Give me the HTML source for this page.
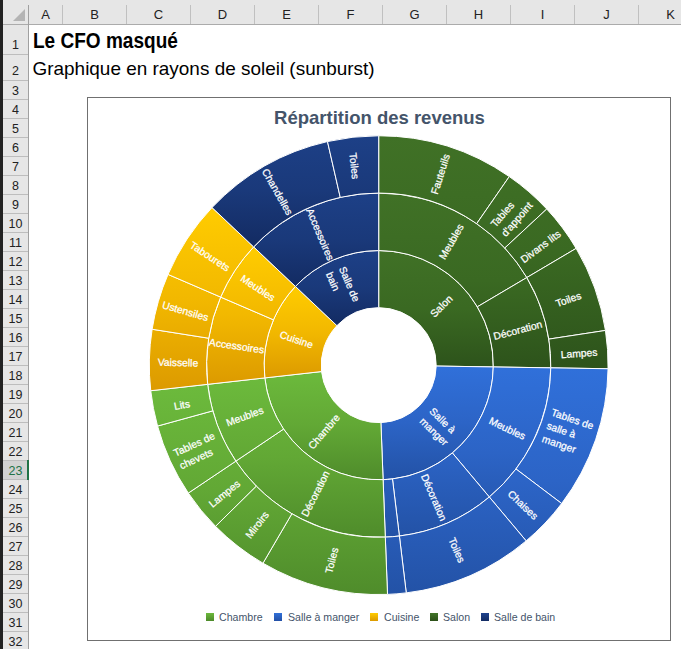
<!DOCTYPE html>
<html><head><meta charset="utf-8"><style>
html,body{margin:0;padding:0;}
body{width:681px;height:649px;overflow:hidden;position:relative;background:#fff;font-family:"Liberation Sans",sans-serif;}
.strip{position:absolute;left:0;top:0;width:3px;height:649px;background:#222;}
.hdr{position:absolute;left:3px;top:0;width:678px;height:24px;background:#e6e6e6;border-bottom:1px solid #ababab;}
.corner{position:absolute;left:3px;top:0;width:25px;height:24px;}
.tri{position:absolute;left:10px;top:9px;width:0;height:0;border-left:12px solid transparent;border-bottom:12px solid #b4b4b4;}
.ch{position:absolute;top:0;height:24px;line-height:30px;text-align:center;font-size:13px;color:#222;}
.cl{position:absolute;top:5px;width:1px;height:19px;background:#c0c0c0;}
.rh{position:absolute;left:3px;width:25px;text-align:center;font-size:12.5px;color:#222;background:#e6e6e6;}
.rh.sel{background:#d2d2d2;color:#217346;}
.rl{position:absolute;left:3px;width:25px;height:1px;background:#bdbdbd;}
.vl{position:absolute;left:28px;top:5px;width:1px;height:644px;background:#a0a0a0;}
.selbar{position:absolute;left:27px;width:2px;background:#217346;}
.t1{position:absolute;left:33px;top:28.5px;font-size:21.5px;font-weight:bold;color:#000;line-height:24px;transform:scaleX(0.885);transform-origin:0 0;}
.t2{position:absolute;left:32.5px;top:58.5px;font-size:18.95px;color:#000;line-height:20px;}
.box{position:absolute;left:87px;top:97px;width:582px;height:542px;border:1px solid #707070;background:#fff;}
.ctitle{position:absolute;left:87.5px;top:107px;width:584px;text-align:center;font-size:18.5px;font-weight:bold;color:#44546a;line-height:22px;}
.chart{position:absolute;left:0;top:0;}
.leg{position:absolute;top:610px;font-size:10.6px;color:#44546a;line-height:14px;white-space:nowrap;}
.sq{position:absolute;top:613px;width:8px;height:8px;}
</style></head><body>
<div class="hdr"></div>
<div class="corner"><div class="tri"></div></div>
<div class="ch" style="left:29px;width:33px">A</div><div class="ch" style="left:63px;width:63px">B</div><div class="cl" style="left:62px"></div><div class="ch" style="left:127px;width:63px">C</div><div class="cl" style="left:126px"></div><div class="ch" style="left:191px;width:63px">D</div><div class="cl" style="left:190px"></div><div class="ch" style="left:255px;width:63px">E</div><div class="cl" style="left:254px"></div><div class="ch" style="left:319px;width:63px">F</div><div class="cl" style="left:318px"></div><div class="ch" style="left:383px;width:63px">G</div><div class="cl" style="left:382px"></div><div class="ch" style="left:447px;width:63px">H</div><div class="cl" style="left:446px"></div><div class="ch" style="left:511px;width:63px">I</div><div class="cl" style="left:510px"></div><div class="ch" style="left:575px;width:63px">J</div><div class="cl" style="left:574px"></div><div class="ch" style="left:639px;width:63px">K</div><div class="cl" style="left:638px"></div>
<div class="rh" style="top:25px;height:29px"><span style="position:absolute;left:0;width:25px;top:11px;line-height:19px">1</span></div><div class="rl" style="top:54px"></div><div class="rh" style="top:55px;height:25px"><span style="position:absolute;left:0;width:25px;top:7px;line-height:19px">2</span></div><div class="rl" style="top:80px"></div><div class="rh" style="top:81px;height:18px"><span style="position:absolute;left:0;width:25px;top:1px;line-height:19px">3</span></div><div class="rl" style="top:99px"></div><div class="rh" style="top:100px;height:18px"><span style="position:absolute;left:0;width:25px;top:1px;line-height:19px">4</span></div><div class="rl" style="top:118px"></div><div class="rh" style="top:119px;height:18px"><span style="position:absolute;left:0;width:25px;top:1px;line-height:19px">5</span></div><div class="rl" style="top:137px"></div><div class="rh" style="top:138px;height:18px"><span style="position:absolute;left:0;width:25px;top:1px;line-height:19px">6</span></div><div class="rl" style="top:156px"></div><div class="rh" style="top:157px;height:18px"><span style="position:absolute;left:0;width:25px;top:1px;line-height:19px">7</span></div><div class="rl" style="top:175px"></div><div class="rh" style="top:176px;height:18px"><span style="position:absolute;left:0;width:25px;top:1px;line-height:19px">8</span></div><div class="rl" style="top:194px"></div><div class="rh" style="top:195px;height:18px"><span style="position:absolute;left:0;width:25px;top:1px;line-height:19px">9</span></div><div class="rl" style="top:213px"></div><div class="rh" style="top:214px;height:18px"><span style="position:absolute;left:0;width:25px;top:1px;line-height:19px">10</span></div><div class="rl" style="top:232px"></div><div class="rh" style="top:233px;height:18px"><span style="position:absolute;left:0;width:25px;top:1px;line-height:19px">11</span></div><div class="rl" style="top:251px"></div><div class="rh" style="top:252px;height:18px"><span style="position:absolute;left:0;width:25px;top:1px;line-height:19px">12</span></div><div class="rl" style="top:270px"></div><div class="rh" style="top:271px;height:18px"><span style="position:absolute;left:0;width:25px;top:1px;line-height:19px">13</span></div><div class="rl" style="top:289px"></div><div class="rh" style="top:290px;height:18px"><span style="position:absolute;left:0;width:25px;top:1px;line-height:19px">14</span></div><div class="rl" style="top:308px"></div><div class="rh" style="top:309px;height:18px"><span style="position:absolute;left:0;width:25px;top:1px;line-height:19px">15</span></div><div class="rl" style="top:327px"></div><div class="rh" style="top:328px;height:18px"><span style="position:absolute;left:0;width:25px;top:1px;line-height:19px">16</span></div><div class="rl" style="top:346px"></div><div class="rh" style="top:347px;height:18px"><span style="position:absolute;left:0;width:25px;top:1px;line-height:19px">17</span></div><div class="rl" style="top:365px"></div><div class="rh" style="top:366px;height:18px"><span style="position:absolute;left:0;width:25px;top:1px;line-height:19px">18</span></div><div class="rl" style="top:384px"></div><div class="rh" style="top:385px;height:18px"><span style="position:absolute;left:0;width:25px;top:1px;line-height:19px">19</span></div><div class="rl" style="top:403px"></div><div class="rh" style="top:404px;height:18px"><span style="position:absolute;left:0;width:25px;top:1px;line-height:19px">20</span></div><div class="rl" style="top:422px"></div><div class="rh" style="top:423px;height:18px"><span style="position:absolute;left:0;width:25px;top:1px;line-height:19px">21</span></div><div class="rl" style="top:441px"></div><div class="rh" style="top:442px;height:18px"><span style="position:absolute;left:0;width:25px;top:1px;line-height:19px">22</span></div><div class="rl" style="top:460px"></div><div class="rh sel" style="top:461px;height:18px"><span style="position:absolute;left:0;width:25px;top:1px;line-height:19px">23</span></div><div class="rl" style="top:479px"></div><div class="rh" style="top:480px;height:18px"><span style="position:absolute;left:0;width:25px;top:1px;line-height:19px">24</span></div><div class="rl" style="top:498px"></div><div class="rh" style="top:499px;height:18px"><span style="position:absolute;left:0;width:25px;top:1px;line-height:19px">25</span></div><div class="rl" style="top:517px"></div><div class="rh" style="top:518px;height:18px"><span style="position:absolute;left:0;width:25px;top:1px;line-height:19px">26</span></div><div class="rl" style="top:536px"></div><div class="rh" style="top:537px;height:18px"><span style="position:absolute;left:0;width:25px;top:1px;line-height:19px">27</span></div><div class="rl" style="top:555px"></div><div class="rh" style="top:556px;height:18px"><span style="position:absolute;left:0;width:25px;top:1px;line-height:19px">28</span></div><div class="rl" style="top:574px"></div><div class="rh" style="top:575px;height:18px"><span style="position:absolute;left:0;width:25px;top:1px;line-height:19px">29</span></div><div class="rl" style="top:593px"></div><div class="rh" style="top:594px;height:18px"><span style="position:absolute;left:0;width:25px;top:1px;line-height:19px">30</span></div><div class="rl" style="top:612px"></div><div class="rh" style="top:613px;height:18px"><span style="position:absolute;left:0;width:25px;top:1px;line-height:19px">31</span></div><div class="rl" style="top:631px"></div><div class="rh" style="top:632px;height:18px"><span style="position:absolute;left:0;width:25px;top:1px;line-height:19px">32</span></div><div class="rl" style="top:650px"></div>
<div class="vl"></div>
<div class="selbar" style="top:460px;height:20px"></div>
<div class="strip"></div>
<div class="t1">Le CFO masqué</div>
<div class="t2">Graphique en rayons de soleil (sunburst)</div>
<div class="box"></div>
<div class="ctitle">Répartition des revenus</div>
<svg class="chart" width="681" height="649" viewBox="0 0 681 649">
<defs><linearGradient id="gSalon0" gradientUnits="userSpaceOnUse" x1="0" y1="250.5" x2="0" y2="367.0"><stop offset="0" stop-color="#407126"/><stop offset="0.5" stop-color="#3a6922"/><stop offset="1" stop-color="#2d531b"/></linearGradient><linearGradient id="gSalon1" gradientUnits="userSpaceOnUse" x1="0" y1="193.0" x2="0" y2="367.9"><stop offset="0" stop-color="#407126"/><stop offset="0.5" stop-color="#3a6922"/><stop offset="1" stop-color="#2d531b"/></linearGradient><linearGradient id="gSalon2" gradientUnits="userSpaceOnUse" x1="0" y1="135.7" x2="0" y2="368.8"><stop offset="0" stop-color="#407126"/><stop offset="0.5" stop-color="#3a6922"/><stop offset="1" stop-color="#2d531b"/></linearGradient><linearGradient id="gSaM0" gradientUnits="userSpaceOnUse" x1="0" y1="366.1" x2="0" y2="479.7"><stop offset="0" stop-color="#3070da"/><stop offset="0.5" stop-color="#2c64c6"/><stop offset="1" stop-color="#2352a6"/></linearGradient><linearGradient id="gSaM1" gradientUnits="userSpaceOnUse" x1="0" y1="367.0" x2="0" y2="537.1"><stop offset="0" stop-color="#3070da"/><stop offset="0.5" stop-color="#2c64c6"/><stop offset="1" stop-color="#2352a6"/></linearGradient><linearGradient id="gSaM2" gradientUnits="userSpaceOnUse" x1="0" y1="367.9" x2="0" y2="594.4"><stop offset="0" stop-color="#3070da"/><stop offset="0.5" stop-color="#2c64c6"/><stop offset="1" stop-color="#2352a6"/></linearGradient><linearGradient id="gChambre0" gradientUnits="userSpaceOnUse" x1="0" y1="371.6" x2="0" y2="479.7"><stop offset="0" stop-color="#6cba3c"/><stop offset="0.5" stop-color="#62a835"/><stop offset="1" stop-color="#4f8c2b"/></linearGradient><linearGradient id="gChambre1" gradientUnits="userSpaceOnUse" x1="0" y1="377.9" x2="0" y2="537.2"><stop offset="0" stop-color="#6cba3c"/><stop offset="0.5" stop-color="#62a835"/><stop offset="1" stop-color="#4f8c2b"/></linearGradient><linearGradient id="gChambre2" gradientUnits="userSpaceOnUse" x1="0" y1="384.3" x2="0" y2="594.5"><stop offset="0" stop-color="#6cba3c"/><stop offset="0.5" stop-color="#62a835"/><stop offset="1" stop-color="#4f8c2b"/></linearGradient><linearGradient id="gCuisine0" gradientUnits="userSpaceOnUse" x1="0" y1="286.4" x2="0" y2="377.9"><stop offset="0" stop-color="#ffcc00"/><stop offset="0.5" stop-color="#f2b800"/><stop offset="1" stop-color="#dc9a00"/></linearGradient><linearGradient id="gCuisine1" gradientUnits="userSpaceOnUse" x1="0" y1="246.9" x2="0" y2="384.3"><stop offset="0" stop-color="#ffcc00"/><stop offset="0.5" stop-color="#f2b800"/><stop offset="1" stop-color="#dc9a00"/></linearGradient><linearGradient id="gCuisine2" gradientUnits="userSpaceOnUse" x1="0" y1="207.5" x2="0" y2="390.7"><stop offset="0" stop-color="#ffcc00"/><stop offset="0.5" stop-color="#f2b800"/><stop offset="1" stop-color="#dc9a00"/></linearGradient><linearGradient id="gSdB0" gradientUnits="userSpaceOnUse" x1="0" y1="250.5" x2="0" y2="325.6"><stop offset="0" stop-color="#1d4087"/><stop offset="0.5" stop-color="#1a397a"/><stop offset="1" stop-color="#132b62"/></linearGradient><linearGradient id="gSdB1" gradientUnits="userSpaceOnUse" x1="0" y1="193.0" x2="0" y2="286.4"><stop offset="0" stop-color="#1d4087"/><stop offset="0.5" stop-color="#1a397a"/><stop offset="1" stop-color="#132b62"/></linearGradient><linearGradient id="gSdB2" gradientUnits="userSpaceOnUse" x1="0" y1="135.7" x2="0" y2="246.9"><stop offset="0" stop-color="#1d4087"/><stop offset="0.5" stop-color="#1a397a"/><stop offset="1" stop-color="#132b62"/></linearGradient></defs>
<g stroke="#fff" stroke-width="1"><path d="M378.70,250.55 A114.6,114.6 0 0 1 493.29,366.95 L436.19,366.05 A57.5,57.5 0 0 0 378.70,307.65 Z" fill="url(#gSalon0)"/><path d="M378.70,193.05 A172.1,172.1 0 0 1 526.83,277.54 L477.34,306.81 A114.6,114.6 0 0 0 378.70,250.55 Z" fill="url(#gSalon1)"/><path d="M378.70,135.75 A229.4,229.4 0 0 1 509.29,176.55 L476.67,223.66 A172.1,172.1 0 0 0 378.70,193.05 Z" fill="url(#gSalon2)"/><path d="M509.29,176.55 A229.4,229.4 0 0 1 546.75,208.99 L504.77,248.00 A172.1,172.1 0 0 0 476.67,223.66 Z" fill="url(#gSalon2)"/><path d="M546.75,208.99 A229.4,229.4 0 0 1 576.15,248.38 L526.83,277.54 A172.1,172.1 0 0 0 504.77,248.00 Z" fill="url(#gSalon2)"/><path d="M526.83,277.54 A172.1,172.1 0 0 1 550.78,367.85 L493.29,366.95 A114.6,114.6 0 0 0 477.34,306.81 Z" fill="url(#gSalon1)"/><path d="M576.15,248.38 A229.4,229.4 0 0 1 605.46,330.45 L548.82,339.12 A172.1,172.1 0 0 0 526.83,277.54 Z" fill="url(#gSalon2)"/><path d="M605.46,330.45 A229.4,229.4 0 0 1 608.07,368.75 L550.78,367.85 A172.1,172.1 0 0 0 548.82,339.12 Z" fill="url(#gSalon2)"/><path d="M493.29,366.95 A114.6,114.6 0 0 1 383.10,479.67 L380.91,422.61 A57.5,57.5 0 0 0 436.19,366.05 Z" fill="url(#gSaM0)"/><path d="M550.78,367.85 A172.1,172.1 0 0 1 489.32,496.99 L452.36,452.94 A114.6,114.6 0 0 0 493.29,366.95 Z" fill="url(#gSaM1)"/><path d="M608.07,368.75 A229.4,229.4 0 0 1 561.67,503.53 L515.96,468.96 A172.1,172.1 0 0 0 550.78,367.85 Z" fill="url(#gSaM2)"/><path d="M561.67,503.53 A229.4,229.4 0 0 1 526.16,540.88 L489.32,496.99 A172.1,172.1 0 0 0 515.96,468.96 Z" fill="url(#gSaM2)"/><path d="M489.32,496.99 A172.1,172.1 0 0 1 399.38,536.00 L392.47,478.92 A114.6,114.6 0 0 0 452.36,452.94 Z" fill="url(#gSaM1)"/><path d="M526.16,540.88 A229.4,229.4 0 0 1 406.26,592.89 L399.38,536.00 A172.1,172.1 0 0 0 489.32,496.99 Z" fill="url(#gSaM2)"/><path d="M399.38,536.00 A172.1,172.1 0 0 1 385.31,537.12 L383.10,479.67 A114.6,114.6 0 0 0 392.47,478.92 Z" fill="url(#gSaM1)"/><path d="M406.26,592.89 A229.4,229.4 0 0 1 387.51,594.38 L385.31,537.12 A172.1,172.1 0 0 0 399.38,536.00 Z" fill="url(#gSaM2)"/><path d="M383.10,479.67 A114.6,114.6 0 0 1 264.81,377.92 L321.56,371.56 A57.5,57.5 0 0 0 380.91,422.61 Z" fill="url(#gChambre0)"/><path d="M385.31,537.12 A172.1,172.1 0 0 1 235.85,461.14 L283.58,429.07 A114.6,114.6 0 0 0 383.10,479.67 Z" fill="url(#gChambre1)"/><path d="M387.51,594.38 A229.4,229.4 0 0 1 262.96,563.21 L291.87,513.74 A172.1,172.1 0 0 0 385.31,537.12 Z" fill="url(#gChambre2)"/><path d="M262.96,563.21 A229.4,229.4 0 0 1 215.50,526.37 L256.27,486.10 A172.1,172.1 0 0 0 291.87,513.74 Z" fill="url(#gChambre2)"/><path d="M215.50,526.37 A229.4,229.4 0 0 1 188.30,493.10 L235.85,461.14 A172.1,172.1 0 0 0 256.27,486.10 Z" fill="url(#gChambre2)"/><path d="M235.85,461.14 A172.1,172.1 0 0 1 207.67,384.33 L264.81,377.92 A114.6,114.6 0 0 0 283.58,429.07 Z" fill="url(#gChambre1)"/><path d="M188.30,493.10 A229.4,229.4 0 0 1 157.54,426.07 L212.78,410.85 A172.1,172.1 0 0 0 235.85,461.14 Z" fill="url(#gChambre2)"/><path d="M157.54,426.07 A229.4,229.4 0 0 1 150.73,390.72 L207.67,384.33 A172.1,172.1 0 0 0 212.78,410.85 Z" fill="url(#gChambre2)"/><path d="M264.81,377.92 A114.6,114.6 0 0 1 295.43,286.41 L336.92,325.64 A57.5,57.5 0 0 0 321.56,371.56 Z" fill="url(#gCuisine0)"/><path d="M207.67,384.33 A172.1,172.1 0 0 1 220.64,297.08 L273.45,319.82 A114.6,114.6 0 0 0 264.81,377.92 Z" fill="url(#gCuisine1)"/><path d="M150.73,390.72 A229.4,229.4 0 0 1 152.12,329.26 L208.72,338.23 A172.1,172.1 0 0 0 207.67,384.33 Z" fill="url(#gCuisine2)"/><path d="M152.12,329.26 A229.4,229.4 0 0 1 168.01,274.41 L220.64,297.08 A172.1,172.1 0 0 0 208.72,338.23 Z" fill="url(#gCuisine2)"/><path d="M220.64,297.08 A172.1,172.1 0 0 1 253.66,246.90 L295.43,286.41 A114.6,114.6 0 0 0 273.45,319.82 Z" fill="url(#gCuisine1)"/><path d="M168.01,274.41 A229.4,229.4 0 0 1 212.02,207.53 L253.66,246.90 A172.1,172.1 0 0 0 220.64,297.08 Z" fill="url(#gCuisine2)"/><path d="M295.43,286.41 A114.6,114.6 0 0 1 378.70,250.55 L378.70,307.65 A57.5,57.5 0 0 0 336.92,325.64 Z" fill="url(#gSdB0)"/><path d="M253.66,246.90 A172.1,172.1 0 0 1 378.70,193.05 L378.70,250.55 A114.6,114.6 0 0 0 295.43,286.41 Z" fill="url(#gSdB1)"/><path d="M212.02,207.53 A229.4,229.4 0 0 1 327.49,141.54 L340.28,197.39 A172.1,172.1 0 0 0 253.66,246.90 Z" fill="url(#gSdB2)"/><path d="M327.49,141.54 A229.4,229.4 0 0 1 378.70,135.75 L378.70,193.05 A172.1,172.1 0 0 0 340.28,197.39 Z" fill="url(#gSdB2)"/></g>
<g fill="#fff" font-family="Liberation Sans, sans-serif" font-size="10.3" text-anchor="start" dominant-baseline="central" stroke="#fff" stroke-width="0.25"><text transform="translate(440.02,304.78) rotate(-44.55)"><tspan x="-13.2" y="1.5">Salon</tspan></text><text transform="translate(449.72,240.63) rotate(-60.30)"><tspan x="-19.5" y="1.5">Meubles</tspan></text><text transform="translate(438.57,173.53) rotate(-72.65)"><tspan x="-20.9" y="1.5">Fauteuils</tspan></text><text transform="translate(510.14,213.41) rotate(-49.10)"><tspan x="-20.7" y="-5.5">Tables</tspan><tspan x="-20.7" y="8.5">d'appoint</tspan></text><text transform="translate(539.55,245.04) rotate(-36.75)"><tspan x="-23.5" y="1.5">Divans lits</tspan></text><text transform="translate(517.26,328.41) rotate(-14.85)"><tspan x="-24.9" y="1.5">Décoration</tspan></text><text transform="translate(567.76,297.64) rotate(-19.65)"><tspan x="-13.2" y="1.5">Toiles</tspan></text><text transform="translate(578.99,351.50) rotate(-3.90)"><tspan x="-18.3" y="1.5">Lampes</tspan></text><text transform="translate(440.23,425.30) rotate(44.35)"><tspan x="-17.5" y="-5.5">Salle à</tspan><tspan x="-17.5" y="8.5">manger</tspan></text><text transform="translate(508.14,426.75) rotate(25.45)"><tspan x="-19.5" y="1.5">Meubles</tspan></text><text transform="translate(568.51,430.51) rotate(19.00)"><tspan x="-22.0" y="-12.5">Tables de</tspan><tspan x="-22.0" y="1.5">salle à</tspan><tspan x="-22.0" y="15.5">manger</tspan></text><text transform="translate(524.20,503.46) rotate(43.55)"><tspan x="-18.6" y="1.5">Chaises</tspan></text><text transform="translate(435.75,496.66) rotate(66.55)"><tspan x="-24.9" y="1.5">Décoration</tspan></text><text transform="translate(458.59,549.32) rotate(66.55)"><tspan x="-13.2" y="1.5">Toiles</tspan></text><text transform="translate(322.59,430.39) rotate(-49.30)"><tspan x="-21.2" y="1.5">Chambre</tspan></text><text transform="translate(313.73,492.93) rotate(-63.05)"><tspan x="-24.9" y="1.5">Décoration</tspan></text><text transform="translate(329.96,559.89) rotate(-75.95)"><tspan x="-13.2" y="1.5">Toiles</tspan></text><text transform="translate(255.59,523.72) rotate(-52.18)"><tspan x="-15.4" y="1.5">Miroirs</tspan></text><text transform="translate(223.30,492.23) rotate(-39.28)"><tspan x="-18.3" y="1.5">Lampes</tspan></text><text transform="translate(244.12,414.53) rotate(-20.15)"><tspan x="-19.5" y="1.5">Meubles</tspan></text><text transform="translate(196.24,448.88) rotate(-24.65)"><tspan x="-22.0" y="-5.5">Tables de</tspan><tspan x="-22.0" y="8.5">chevets</tspan></text><text transform="translate(181.57,403.11) rotate(-10.90)"><tspan x="-8.0" y="1.5">Lits</tspan></text><text transform="translate(297.10,337.85) rotate(18.50)"><tspan x="-17.2" y="1.5">Cuisine</tspan></text><text transform="translate(236.91,344.09) rotate(8.45)"><tspan x="-27.8" y="1.5">Accessoires</tspan></text><text transform="translate(178.00,360.60) rotate(1.30)"><tspan x="-20.2" y="1.5">Vaisselle</tspan></text><text transform="translate(185.87,309.31) rotate(16.15)"><tspan x="-23.8" y="1.5">Ustensiles</tspan></text><text transform="translate(258.96,286.34) rotate(33.35)"><tspan x="-19.5" y="1.5">Meubles</tspan></text><text transform="translate(211.01,254.79) rotate(33.35)"><tspan x="-22.6" y="1.5">Tabourets</tspan></text><text transform="translate(344.66,286.12) rotate(66.70)"><tspan x="-18.6" y="-5.5">Salle de</tspan><tspan x="-18.6" y="8.5">bain</tspan></text><text transform="translate(322.00,233.49) rotate(66.70)"><tspan x="-27.8" y="1.5">Accessoires</tspan></text><text transform="translate(279.08,190.86) rotate(60.25)"><tspan x="-25.8" y="1.5">Chandelles</tspan></text><text transform="translate(356.15,165.67) rotate(83.55)"><tspan x="-13.2" y="1.5">Toiles</tspan></text></g>
</svg>
<div class="sq" style="left:206px;background:linear-gradient(#6cb93c,#4d8a2a)"></div><div class="leg" style="left:219px">Chambre</div>
<div class="sq" style="left:274px;background:linear-gradient(#3170d8,#2350a6)"></div><div class="leg" style="left:288px">Salle à manger</div>
<div class="sq" style="left:370px;background:linear-gradient(#ffcc00,#dc9a00)"></div><div class="leg" style="left:384px">Cuisine</div>
<div class="sq" style="left:430px;background:linear-gradient(#427529,#2c5019)"></div><div class="leg" style="left:443px">Salon</div>
<div class="sq" style="left:481px;background:linear-gradient(#20438e,#132c64)"></div><div class="leg" style="left:494px">Salle de bain</div>
</body></html>
